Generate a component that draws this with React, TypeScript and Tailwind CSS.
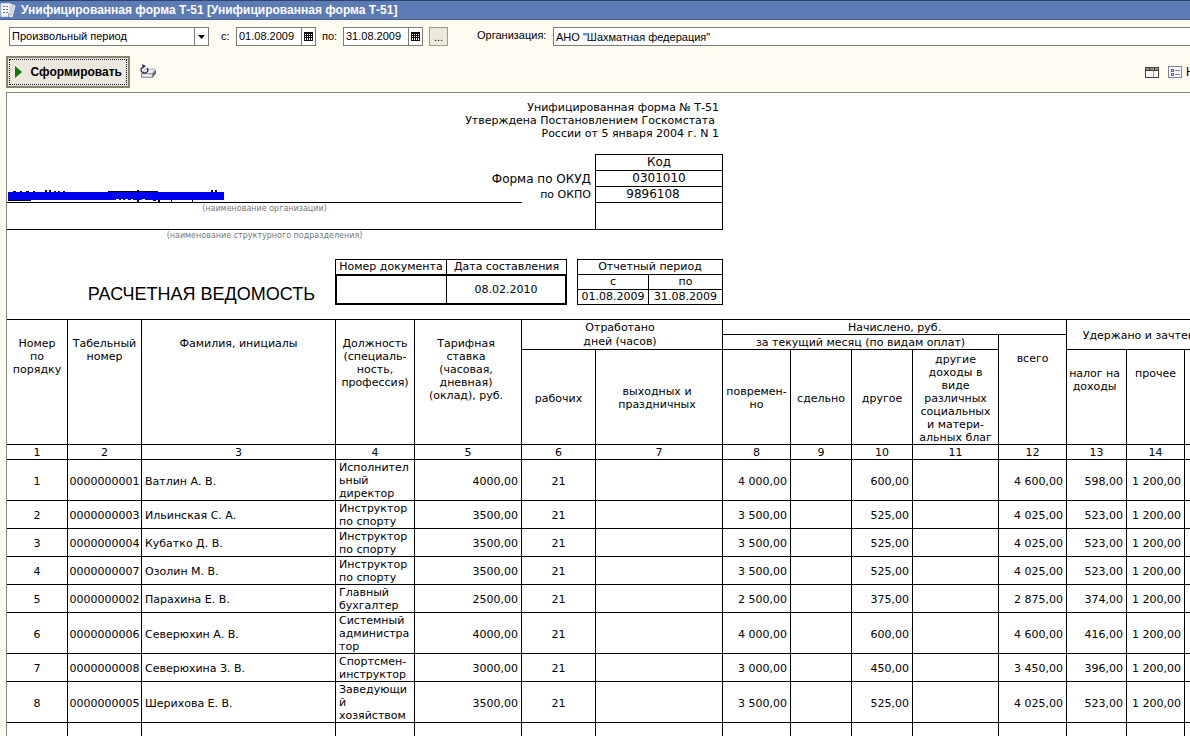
import type { ReactNode } from "react";
import { clsx } from "clsx";

type Employee = {
  id: string;
  name: string;
  position: string[];
  rate: string;
  days: number;
  salary: string;
  other: string;
  total: string;
  tax: string;
  rest: string;
};

const employees: Employee[] = [
  { id: "0000000001", name: "Ватлин А. В.", position: ["Исполнител", "ьный", "директор"], rate: "4000,00", days: 21, salary: "4 000,00", other: "600,00", total: "4 600,00", tax: "598,00", rest: "1 200,00" },
  { id: "0000000003", name: "Ильинская С. А.", position: ["Инструктор", "по спорту"], rate: "3500,00", days: 21, salary: "3 500,00", other: "525,00", total: "4 025,00", tax: "523,00", rest: "1 200,00" },
  { id: "0000000004", name: "Кубатко Д. В.", position: ["Инструктор", "по спорту"], rate: "3500,00", days: 21, salary: "3 500,00", other: "525,00", total: "4 025,00", tax: "523,00", rest: "1 200,00" },
  { id: "0000000007", name: "Озолин М. В.", position: ["Инструктор", "по спорту"], rate: "3500,00", days: 21, salary: "3 500,00", other: "525,00", total: "4 025,00", tax: "523,00", rest: "1 200,00" },
  { id: "0000000002", name: "Парахина Е. В.", position: ["Главный", "бухгалтер"], rate: "2500,00", days: 21, salary: "2 500,00", other: "375,00", total: "2 875,00", tax: "374,00", rest: "1 200,00" },
  { id: "0000000006", name: "Северюхин А. В.", position: ["Системный", "администра", "тор"], rate: "4000,00", days: 21, salary: "4 000,00", other: "600,00", total: "4 600,00", tax: "416,00", rest: "1 200,00" },
  { id: "0000000008", name: "Северюхина З. В.", position: ["Спортсмен-", "инструктор"], rate: "3000,00", days: 21, salary: "3 000,00", other: "450,00", total: "3 450,00", tax: "396,00", rest: "1 200,00" },
  { id: "0000000005", name: "Шерихова Е. В.", position: ["Заведующи", "й", "хозяйством"], rate: "3500,00", days: 21, salary: "3 500,00", other: "525,00", total: "4 025,00", tax: "523,00", rest: "1 200,00" },
];

const columnWidths = [61, 74, 194, 79, 107, 74, 127, 68, 61, 61, 86, 68, 60, 58, 64];

const Lines = ({ text }: { text: string[] }) => (
  <>
    {text.map((line) => (
      <span key={line} className="block whitespace-nowrap">
        {line}
      </span>
    ))}
  </>
);

const Cell = ({ className, children }: { className?: string; children?: ReactNode }) => (
  <td className={clsx("border-r border-b border-black whitespace-nowrap p-0", className)}>{children}</td>
);

const Head = ({
  lines,
  colSpan,
  rowSpan,
  className,
}: {
  lines: string[];
  colSpan?: number;
  rowSpan?: number;
  className?: string;
}) => (
  <th
    colSpan={colSpan}
    rowSpan={rowSpan}
    className={clsx("border-r border-b border-black p-0 text-center font-normal", className)}
  >
    <Lines text={lines} />
  </th>
);

const FormIcon = () => (
  <svg width="16" height="17" viewBox="0 0 16 17" aria-hidden="true">
    <path d="M10 2l5 2-3 11-3-1z" fill="#c9d2e4" stroke="#eef1f7" />
    <path d="M1 1.500h9v10l-2 3H1z" fill="#f4f4f2" stroke="#d8dce6" />
    <path d="M3 4.500h6M3 7.500h6M3 10.500h5" stroke="#77777f" strokeDasharray="2 1" />
    <path d="M8 14.500l2-3H8z" fill="#8a93a8" />
  </svg>
);

const CalendarIcon = () => (
  <svg width="9" height="9" viewBox="0 0 9 9" shapeRendering="crispEdges" aria-hidden="true">
    <path d="M0 0h9v9H0z" fill="#111" />
    <path d="M1 2h1v1H1zM3 2h1v1H3zM5 2h1v1H5zM7 2h1v1H7zM1 4h1v1H1zM3 4h1v1H3zM5 4h1v1H5zM7 4h1v1H7zM1 6h1v2H1zM3 6h1v2H3zM5 6h1v2H5zM7 6h1v2H7z" fill="#fff" />
  </svg>
);

const RefreshPrinterIcon = () => (
  <svg width="17" height="16" viewBox="0 0 17 16" aria-hidden="true">
    <path d="M5 5h10l-3 5H2z" fill="#eeeef2" stroke="#b4b4bc" />
    <path d="M1.500 9.500h11v4h-11z" fill="#d4d4da" stroke="#9a9aa4" />
    <path d="M12.500 9.500l3.500-4v4l-3.500 4.500z" fill="#6c6c76" />
    <path d="M4 11.500h6" stroke="#f4f4f6" />
    <path d="M2 3.500C0 6 1.500 9 4.500 9s4.500-3 2.500-5" fill="none" stroke="#34346c" strokeWidth="1.400" />
    <path d="M2 0l4 2-3.500 3z" fill="#34346c" />
  </svg>
);

const TableIcon = () => (
  <svg width="14" height="11" viewBox="0 0 14 11" shapeRendering="crispEdges" aria-hidden="true">
    <path d="M.5.5h13v10H.5z" fill="#fff" stroke="#44443c" />
    <path d="M1 1h12v2H1z" fill="#8c8c88" />
    <path d="M1 3.500h12M4.500 0v3M9.500 0v3" stroke="#44443c" />
    <path d="M8.500 4v6" stroke="#9a9a90" />
  </svg>
);

const SettingsIcon = () => (
  <svg width="14" height="12" viewBox="0 0 14 12" shapeRendering="crispEdges" aria-hidden="true">
    <path d="M.5.5h13v11H.5z" fill="#f4f6fb" stroke="#8088a4" />
    <path d="M3 3h2v2H3zM3 7h2v2H3z" fill="#fff" stroke="#5a648c" />
    <path d="M7 4.500h5M7 8.500h5" stroke="#8088a4" />
  </svg>
);

// Marker stroke over the organisation name, letter tips stick out of it
const Redaction = () => (
  <svg width="216" height="12" viewBox="0 0 216 12" shapeRendering="crispEdges" className="ml-px block" aria-hidden="true">
    <path d="M5 1h3v2H5zM12 1h2v2h-2zM18 1h3v2h-3zM25 1h2v2h-2zM37 0h2v3h-2zM41 0h2v3h-2zM46 1h2v2h-2zM50 1h2v2h-2zM55 1h2v2h-2zM100 1h50v2h-50zM129 0h2v2h-2zM203 0h2v3h-2zM207 0h2v3h-2zM0 10h23v1H0zM129 9h2v3h-2zM145 10h3v1h-3zM150 10h2v2h-2zM163 10h1v2h-1zM184 10h1v2h-1z" fill="#000" />
    <path d="M0 2h216v8H0z" fill="#0000f0" />
    <path d="M108 9h3v1h-3zM113 9h2v1h-2zM117 9h3v1h-3zM123 9h2v1h-2zM134 9h3v1h-3z" fill="#fff" />
  </svg>
);

const DateField = ({ id, value }: { id: string; value: string }) => (
  <div className="flex h-[19px] w-20 shrink-0 border border-[#7d7d78] bg-white">
    <input id={id} defaultValue={value} className="w-16 min-w-0 pl-0.5 outline-none" />
    <button type="button" aria-label="Календарь" className="flex flex-1 items-center justify-center border-l border-[#7d7d78]">
      <CalendarIcon />
    </button>
  </div>
);

const Toolbar = () => (
  <div className="shrink-0 text-[11px]">
    <div className="flex h-8 items-center pt-px pl-[9px]">
      <div className="relative h-[19px] w-[200px] shrink-0 border border-[#7d7d78] bg-white">
        <select aria-label="Период" className="block h-full w-full appearance-none pl-0.5 outline-none">
          <option>Произвольный период</option>
        </select>
        <span className="pointer-events-none absolute inset-y-0 right-0 flex w-3.5 items-center justify-center border-l border-[#7d7d78]">
          <svg width="7" height="4" viewBox="0 0 7 4" aria-hidden="true">
            <path d="M0 0h7L3.500 4z" />
          </svg>
        </span>
      </div>
      <label htmlFor="from" className="w-[27px] shrink-0 pl-3">с:</label>
      <DateField id="from" value="01.08.2009" />
      <label htmlFor="to" className="w-[27px] shrink-0 pl-1.5">по:</label>
      <DateField id="to" value="31.08.2009" />
      <button type="button" className="ml-1.5 h-[19px] w-[19px] shrink-0 border border-[#9c9a8c] bg-[#ece9dc] leading-4">...</button>
      <label htmlFor="organization" className="w-[105px] shrink-0 pl-[29px] pb-0.5">Организация:</label>
      <input
        id="organization"
        defaultValue={'АНО "Шахматная федерация"'}
        className="h-[19px] min-w-0 flex-1 border border-r-0 border-[#7d7d78] bg-white pl-0.5 outline-none"
      />
    </div>
    <div className="flex h-10 items-center pl-1.5">
      <button type="button" className="h-8 w-[124px] border-2 border-[#85836f] bg-[#ece8de] p-px text-xs font-bold">
        <span className="flex h-full items-center justify-between border border-dotted border-black pr-1 pl-[5px]">
          <svg width="7" height="12" viewBox="0 0 7 12" aria-hidden="true">
            <path d="M0 0l7 6-7 6z" fill="#0a7d0a" />
          </svg>
          Сформировать
        </span>
      </button>
      <button type="button" aria-label="Обновить" className="ml-2.5">
        <RefreshPrinterIcon />
      </button>
      <div className="ml-auto flex items-center">
        <button type="button" aria-label="Таблица" className="mr-[9px]">
          <TableIcon />
        </button>
        <button type="button" className="flex items-center gap-1 text-xs">
          <SettingsIcon />
          <span className="w-1">Н</span>
        </button>
      </div>
    </div>
  </div>
);

const FormHeader = () => (
  <div className="w-[716px]">
    <div className="pt-2 pr-1 text-right text-[11px] leading-[13px]">
      <p>Унифицированная форма № Т-51</p>
      <p className="pr-1">Утверждена Постановлением Госкомстата</p>
      <p>России от 5 января 2004 г. N 1</p>
    </div>

    <div className="mt-3.5 flex">
      <div className="flex-1">
        <p className="mt-[17px] h-4 pr-1 text-right text-xs leading-4">Форма по ОКУД</p>
        <div className="flex h-4 items-end">
          <div className="h-4 w-[515px] border-b border-black pt-[3px]">
            <Redaction />
          </div>
          <p className="flex-1 pr-1 text-right text-[11px] leading-4">по ОКПО</p>
        </div>
        <div className="h-[27px] border-b border-black">
          <p className="w-[515px] text-center text-[8px] leading-3 text-[#777]">(наименование организации)</p>
        </div>
        <p className="w-[515px] text-center text-[8px] leading-3 text-[#777]">(наименование структурного подразделения)</p>
      </div>
      <table className="h-[76px] w-32 border-separate border-spacing-0 self-start border-t border-l border-black text-center text-xs leading-[15px]">
        <tbody>
          <tr>
            <th className="border-r border-b border-black p-0 font-normal">Код</th>
          </tr>
          <tr>
            <Cell>0301010</Cell>
          </tr>
          <tr>
            <Cell className="pr-3">9896108</Cell>
          </tr>
          <tr>
            <Cell className="h-[27px]" />
          </tr>
        </tbody>
      </table>
    </div>

    <div className="mt-[17px] flex h-[60px] text-[11px] leading-[14px]">
      <h1 className="w-[328px] pt-6 pr-5 text-right text-lg leading-[22px] [font-family:'Liberation_Sans',sans-serif]">
        РАСЧЕТНАЯ ВЕДОМОСТЬ
      </h1>
      <table className="h-[46px] w-[232px] table-fixed border-separate border-spacing-0 text-center">
        <thead>
          <tr>
            <th className="w-28 border border-b-0 border-black p-0 font-normal whitespace-nowrap">Номер документа</th>
            <th className="border-t border-r border-black p-0 font-normal">Дата составления</th>
          </tr>
        </thead>
        <tbody>
          <tr>
            <td className="h-[31px] border-2 border-r border-black p-0" />
            <td className="h-[31px] border-2 border-l-0 border-black p-0">08.02.2010</td>
          </tr>
        </tbody>
      </table>
      <table className="ml-2.5 h-[46px] w-[146px] table-fixed border-separate border-spacing-0 border-t border-l border-black text-center">
        <colgroup>
          <col className="w-[71px]" />
          <col />
        </colgroup>
        <thead>
          <tr>
            <Head colSpan={2} lines={["Отчетный период"]} />
          </tr>
          <tr>
            <Head lines={["с"]} />
            <Head lines={["по"]} />
          </tr>
        </thead>
        <tbody>
          <tr>
            <Cell>01.08.2009</Cell>
            <Cell>31.08.2009</Cell>
          </tr>
        </tbody>
      </table>
    </div>
  </div>
);

const PayrollTable = () => (
  <table className="w-[1242px] table-fixed border-separate border-spacing-0 border-t border-black text-[11px] leading-[13px]">
    <colgroup>
      {columnWidths.map((width, i) => (
        <col key={i} style={{ width }} />
      ))}
    </colgroup>
    <thead>
      <tr className="h-[15px]">
        <Head rowSpan={3} className="pt-[17px] align-top" lines={["Номер", "по", "порядку"]} />
        <Head rowSpan={3} className="pt-[17px] align-top" lines={["Табельный", "номер"]} />
        <Head rowSpan={3} className="pt-[17px] align-top" lines={["Фамилия, инициалы"]} />
        <Head rowSpan={3} className="pt-[17px] align-top" lines={["Должность", "(специаль-", "ность,", "профессия)"]} />
        <Head rowSpan={3} className="pt-[17px] pr-1 align-top" lines={["Тарифная", "ставка", "(часовая,", "дневная)", "(оклад), руб."]} />
        <Head colSpan={2} rowSpan={2} className="pt-px pr-1 leading-[14px]" lines={["Отработано", "дней (часов)"]} />
        <Head colSpan={5} className="pt-px" lines={["Начислено, руб."]} />
        <Head colSpan={3} rowSpan={2} className="pt-0.5" lines={["Удержано и зачтено, руб."]} />
      </tr>
      <tr className="h-[15px]">
        <Head colSpan={4} className="pt-px" lines={["за текущий месяц (по видам оплат)"]} />
        <Head rowSpan={2} className="pt-[17px] align-top" lines={["всего"]} />
      </tr>
      <tr className="h-[95px]">
        <Head className="pt-0.5" lines={["рабочих"]} />
        <Head className="pt-0.5 pr-1" lines={["выходных и", "праздничных"]} />
        <Head className="pt-0.5" lines={["повремен-", "но"]} />
        <Head className="pt-0.5" lines={["сдельно"]} />
        <Head className="pt-0.5" lines={["другое"]} />
        <Head className="pt-0.5" lines={["другие", "доходы в", "виде", "различных", "социальных", "и матери-", "альных благ"]} />
        <Head className="pt-[17px] pr-1 align-top" lines={["налог на", "доходы"]} />
        <Head className="pt-[17px] align-top" lines={["прочее"]} />
        <Head lines={[]} />
      </tr>
      <tr className="h-[15px]">
        {columnWidths.map((_, i) => (
          <Head key={i} className="pt-px" lines={[String(i + 1)]} />
        ))}
      </tr>
    </thead>
    <tbody>
      {employees.map((employee, i) => (
        <tr key={employee.id}>
          <Cell className="pt-0.5 text-center">{i + 1}</Cell>
          <Cell className="pt-0.5 text-center">{employee.id}</Cell>
          <Cell className="pt-0.5 pl-[3px]">{employee.name}</Cell>
          <Cell className="pt-px pl-[3px]">
            <Lines text={employee.position} />
          </Cell>
          <Cell className="pt-0.5 pr-[3px] text-right">{employee.rate}</Cell>
          <Cell className="pt-0.5 text-center">{employee.days}</Cell>
          <Cell />
          <Cell className="pt-0.5 pr-[3px] text-right">{employee.salary}</Cell>
          <Cell />
          <Cell className="pt-0.5 pr-[3px] text-right">{employee.other}</Cell>
          <Cell />
          <Cell className="pt-0.5 pr-[3px] text-right">{employee.total}</Cell>
          <Cell className="pt-0.5 pr-[3px] text-right">{employee.tax}</Cell>
          <Cell className="pt-0.5 pr-[3px] text-right">{employee.rest}</Cell>
          <Cell />
        </tr>
      ))}
      <tr className="h-7">
        {columnWidths.map((_, i) => (
          <Cell key={i} />
        ))}
      </tr>
    </tbody>
  </table>
);

const App = () => {
  return (
    <div className="flex h-screen flex-col overflow-hidden bg-[#fefbf0] text-black [font-family:'Liberation_Sans',sans-serif]">
      <header className="flex h-5 shrink-0 items-center gap-[5px] border-t border-b border-t-[#2c4470] border-b-[#4a6090] bg-[#5c7ab4] text-xs font-bold text-white">
        <FormIcon />
        Унифицированная форма Т-51 [Унифицированная форма Т-51]
      </header>
      <Toolbar />
      <main className="ml-1.5 min-h-0 flex-1 overflow-hidden border-t border-l border-[#85857c] bg-white [font-family:'DejaVu_Sans',sans-serif]">
        <FormHeader />
        <PayrollTable />
      </main>
    </div>
  );
};

export default App;
